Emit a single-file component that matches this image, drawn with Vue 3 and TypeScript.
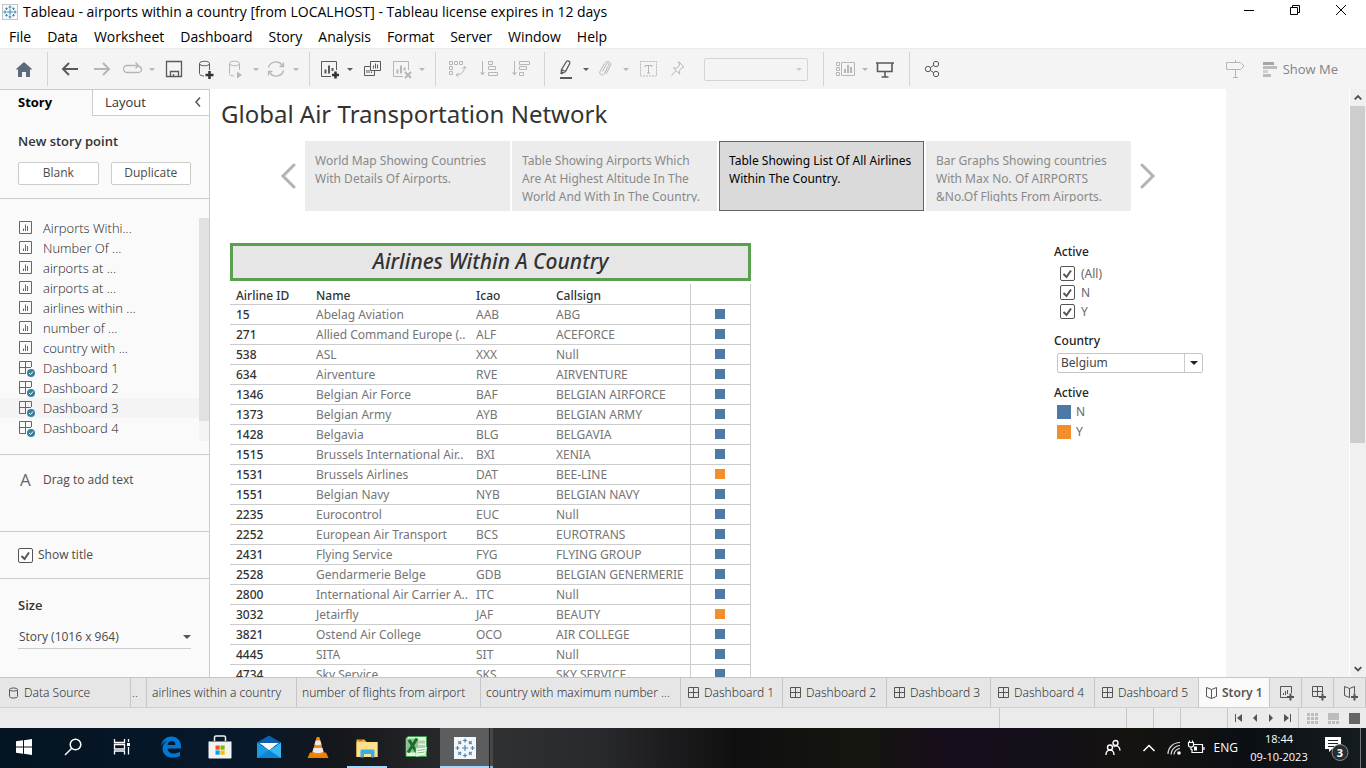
<script setup lang="ts">
import { ref } from 'vue'

interface Tool { icon: string; label: string; caret?: boolean; off?: boolean; gap: string }
interface Airline { id: string; name: string; icao: string; call: string; active?: boolean }
interface Sheet { label: string; kind: 'sheet' | 'dash'; hover?: boolean }
interface Tab { label: string; kind: 'sheet' | 'dash' | 'story'; size: string }

const menus = ['File', 'Data', 'Worksheet', 'Dashboard', 'Story', 'Analysis', 'Format', 'Server', 'Window', 'Help']

const icons: Record<string, string> = {
  home: '<path d="M12 5 20.5 12.5H18V20H14V15H10V20H6V12.5H3.5Z" fill="#5f6b7a" stroke="none"/>',
  back: '<path d="M20 12H5M11 6 5 12l6 6" stroke-width="2"/>',
  forward: '<path d="M4 12h15M13 6l6 6-6 6" stroke-width="2"/>',
  redo: '<path d="M9 15.500H7a3.500 3.500 0 0 1 0-7h11M15.500 5.500l3 3-3 3M18.500 9.500a3 3 0 0 1 0 6H9" stroke-width="1.300"/>',
  save: '<path d="M4.500 4.500h15v15h-15z" stroke-width="1.300"/><path d="M8.500 19.500v-5h8v5M11.500 19.500v-2.500" stroke-width="1.300"/>',
  dbAdd: '<path d="M15.500 13V6.500M5.500 6.500v10c0 1.500 2 2.500 4.500 2.500M5.500 6.500c0-3 10-3 10 0s-10 3-10 0z"/><path d="M15.500 14v8M11.500 18h8" stroke="#333" stroke-width="2.500"/>',
  dbRun: '<path d="M15.500 13V6.500M5.500 6.500v10c0 1.500 2 2.500 4.500 2.500M5.500 6.500c0-3 10-3 10 0s-10 3-10 0z"/><path d="M13 14.500v7l5-3.500z" fill="currentColor" stroke="none"/>',
  refresh: '<path d="M4.500 10.500a7.500 7 0 0 1 13.500-2.500l1 1.500M19.500 13.500A7.500 7 0 0 1 6 16l-1-1.500M19.500 5.500v4h-4M4.500 18.500v-4h4" stroke-width="1.300"/>',
  newSheet: '<path d="M13 19.500H3.500v-15h15V13"/><path d="M7.500 16.500v-4M11 16.500V8.500M14.500 14v-3" stroke-width="2"/><path d="M17.500 14.500v7M14 18h7" stroke="#333" stroke-width="2.500"/>',
  duplicate: '<path d="M10.500 4.500h10v9h-10zM10 9.500H4.500v9h10V14M13.500 11.500v-3M15.500 11.500v-5M17.500 11.500v-4M7 16v-3M9 16v-3M11.500 16v-1.500"/>',
  clear: '<path d="M13 19.500H3.500v-15h15V13"/><path d="M7.500 16.500v-4M11 16.500V8.500M14.500 13.500v-3" stroke-width="2"/><path d="M15 15l6 6M21 15l-6 6" stroke-width="2"/>',
  swap: '<path d="M4.500 4.500h3v3h-3zM9.500 4.500h3v3h-3zM14.500 4.500h3v3h-3zM4.500 9.500h3v3h-3zM4.500 14.500h3v3h-3zM19.500 9.500c0 5-3 8-8 8.500M17.500 11.500l2-2 2 2M13.500 16l-2.500 2 2.500 2"/>',
  asc: '<path d="M5.500 4v13M3.500 15l2 3 2-3M11.500 4.500h4v3h-4zM11.500 9.500h7v3h-7zM11.500 15.500h9v3h-9z"/>',
  desc: '<path d="M5.500 4v13M3.500 15l2 3 2-3M10.500 4.500h10v3h-10zM10.500 9.500h7v3h-7zM10.500 15.500h4v3h-4z"/>',
  pen: '<path d="M7.500 12.500 12.500 4.500c1-1.500 4 0 3.200 2L11.500 14.500l-3.500 2zM7.500 12.500l4 2M7.500 12.500 7 17" stroke-width="1.300"/><path d="M6 21h12" stroke-width="2"/>',
  clip: '<path d="M8.500 14.500l4-7.500c1-1.500 3-.5 2.300 1.200l-4.500 8.500c-1.500 2.500-5.500.8-4.300-2.200l4.500-8c2-3.500 7.500-1.500 6 2l-4.500 8.500"/>',
  text: '<path d="M4.500 4.500h16v14.500h-16z" stroke-dasharray="2 1"/><path d="M9 10V8.500h7V10M12.500 8.500V16M11 16h3"/>',
  pin: '<path d="M12.500 4.500l5.500 5.500-2 .5-2.500 3 .2 3.500-6.200-6 3.500.200 2.500-3zM9.500 14l-4 4.500"/>',
  cards: '<path d="M3.500 5.500h3v3h-3zM3.500 10.500h3v3h-3zM3.500 15.500h3v3h-3zM8.500 5.500h13v13h-13z"/><path d="M12 16v-4M15 16V8M18 16v-6" stroke-width="2"/>',
  present: '<path d="M3 6h18M4.500 6v8.500h14.500V6M12 14.500V20M8.500 20h7" stroke-width="1.600"/>',
  share: '<circle cx="7" cy="12" r="2.700"/><circle cx="15" cy="7" r="2.700"/><circle cx="15" cy="17" r="2.700"/><path d="M9.300 10.500l3.400-2.100M9.300 13.500l3.400 2.100"/>',
  sign: '<path d="M3.500 5.500h14l3.500 3.500-3.500 3.500h-14zM12.500 3v2.500M12.500 12.500v8M10 20.500h5"/>',
}

const groups: Tool[][] = [
  [{ icon: 'home', label: 'Start page', gap: 'g0' }],
  [
    { icon: 'back', label: 'Undo', gap: 'g0' },
    { icon: 'forward', label: 'Redo', off: true, gap: 'g8' },
    { icon: 'redo', label: 'Replay', off: true, caret: true, gap: 'g6' },
    { icon: 'save', label: 'Save', gap: 'g2' },
    { icon: 'dbAdd', label: 'New data source', gap: 'g8' },
    { icon: 'dbRun', label: 'Pause auto updates', off: true, caret: true, gap: 'g6' },
    { icon: 'refresh', label: 'Run update', off: true, caret: true, gap: 'g0' },
  ],
  [
    { icon: 'newSheet', label: 'New worksheet', caret: true, gap: 'g0' },
    { icon: 'duplicate', label: 'Duplicate', gap: 'g2' },
    { icon: 'clear', label: 'Clear sheet', off: true, caret: true, gap: 'g6' },
  ],
  [
    { icon: 'swap', label: 'Swap rows and columns', off: true, gap: 'g0' },
    { icon: 'asc', label: 'Sort ascending', off: true, gap: 'g8' },
    { icon: 'desc', label: 'Sort descending', off: true, gap: 'g8' },
  ],
  [
    { icon: 'pen', label: 'Highlight', caret: true, gap: 'g0' },
    { icon: 'clip', label: 'Group members', off: true, caret: true, gap: 'g0' },
    { icon: 'text', label: 'Show mark labels', off: true, gap: 'g2' },
    { icon: 'pin', label: 'Fix axes', off: true, gap: 'g6' },
  ],
  [
    { icon: 'cards', label: 'Show or hide cards', off: true, caret: true, gap: 'g0' },
    { icon: 'present', label: 'Presentation mode', gap: 'g0' },
  ],
  [{ icon: 'share', label: 'Share', gap: 'g0' }],
]

const sheets: Sheet[] = [
  { label: 'Airports Withi...', kind: 'sheet' },
  { label: 'Number Of ...', kind: 'sheet' },
  { label: 'airports at ...', kind: 'sheet' },
  { label: 'airports at ...', kind: 'sheet' },
  { label: 'airlines within ...', kind: 'sheet' },
  { label: 'number of ...', kind: 'sheet' },
  { label: 'country with ...', kind: 'sheet' },
  { label: 'Dashboard 1', kind: 'dash' },
  { label: 'Dashboard 2', kind: 'dash' },
  { label: 'Dashboard 3', kind: 'dash', hover: true },
  { label: 'Dashboard 4', kind: 'dash' },
]

const points = [
  ['World Map Showing Countries', 'With Details Of Airports.'],
  ['Table Showing Airports Which', 'Are At Highest Altitude In The', 'World And With In The Country.'],
  ['Table Showing List Of All Airlines', 'Within The Country.'],
  ['Bar Graphs Showing countries', 'With Max No. Of AIRPORTS', '&No.Of Flights From Airports.'],
]
const current = ref(2)

const airlines: Airline[] = [
  { id: '15', name: 'Abelag Aviation', icao: 'AAB', call: 'ABG' },
  { id: '271', name: 'Allied Command Europe (..', icao: 'ALF', call: 'ACEFORCE' },
  { id: '538', name: 'ASL', icao: 'XXX', call: 'Null' },
  { id: '634', name: 'Airventure', icao: 'RVE', call: 'AIRVENTURE' },
  { id: '1346', name: 'Belgian Air Force', icao: 'BAF', call: 'BELGIAN AIRFORCE' },
  { id: '1373', name: 'Belgian Army', icao: 'AYB', call: 'BELGIAN ARMY' },
  { id: '1428', name: 'Belgavia', icao: 'BLG', call: 'BELGAVIA' },
  { id: '1515', name: 'Brussels International Air..', icao: 'BXI', call: 'XENIA' },
  { id: '1531', name: 'Brussels Airlines', icao: 'DAT', call: 'BEE-LINE', active: true },
  { id: '1551', name: 'Belgian Navy', icao: 'NYB', call: 'BELGIAN NAVY' },
  { id: '2235', name: 'Eurocontrol', icao: 'EUC', call: 'Null' },
  { id: '2252', name: 'European Air Transport', icao: 'BCS', call: 'EUROTRANS' },
  { id: '2431', name: 'Flying Service', icao: 'FYG', call: 'FLYING GROUP' },
  { id: '2528', name: 'Gendarmerie Belge', icao: 'GDB', call: 'BELGIAN GENERMERIE' },
  { id: '2800', name: 'International Air Carrier A..', icao: 'ITC', call: 'Null' },
  { id: '3032', name: 'Jetairfly', icao: 'JAF', call: 'BEAUTY', active: true },
  { id: '3821', name: 'Ostend Air College', icao: 'OCO', call: 'AIR COLLEGE' },
  { id: '4445', name: 'SITA', icao: 'SIT', call: 'Null' },
  { id: '4734', name: 'Sky Service', icao: 'SKS', call: 'SKY SERVICE' },
]

const filters = ref([
  { label: '(All)', on: true },
  { label: 'N', on: true },
  { label: 'Y', on: true },
])
const showTitle = ref(true)
const country = ref('Belgium')
const storySize = ref('Story (1016 x 964)')

const tabs: Tab[] = [
  { label: '..', kind: 'sheet', size: 'cut' },
  { label: 'airlines within a country', kind: 'sheet', size: 'w150' },
  { label: 'number of flights from airport', kind: 'sheet', size: 'w184' },
  { label: 'country with maximum number ...', kind: 'sheet', size: 'w200' },
  { label: 'Dashboard 1', kind: 'dash', size: 'w102' },
  { label: 'Dashboard 2', kind: 'dash', size: 'w104' },
  { label: 'Dashboard 3', kind: 'dash', size: 'w104' },
  { label: 'Dashboard 4', kind: 'dash', size: 'w104' },
  { label: 'Dashboard 5', kind: 'dash', size: 'w104' },
  { label: 'Story 1', kind: 'story', size: 'w71' },
]
const rays = [0, 45, 90, 135, 180, 225, 270, 315]
</script>

<template>
  <div class="app">
    <header class="titlebar">
      <svg class="logo" viewBox="0 0 16 16" aria-hidden="true">
        <rect x="0.500" y="0.500" width="15" height="15" fill="#f7f9fb" stroke="#c4c4c4" />
        <path d="M8 5v6M5 8h6M8 1.500v3M6.500 3h3M8 11.500v3M6.500 13h3M1.500 8h3M3 6.500v3M11.500 8h3M13 6.500v3M4.500 3.500v2.500M3.300 4.700h2.500M11.500 3.500v2.500M10.200 4.700h2.500M4.500 10v2.500M3.300 11.300h2.500M11.500 10v2.500M10.200 11.300h2.500" fill="none" stroke="#3b84b4" />
      </svg>
      <h1>Tableau - airports within a country [from LOCALHOST] - Tableau license expires in 12 days</h1>
      <div class="winbtns">
        <button type="button" aria-label="Minimize"><svg viewBox="0 0 12 12"><path d="M1 6.500h10" /></svg></button>
        <button type="button" aria-label="Restore"><svg viewBox="0 0 12 12"><path d="M1.500 3.500h7v7h-7zM3.500 3.500v-2h7v7h-2" /></svg></button>
        <button type="button" aria-label="Close"><svg viewBox="0 0 12 12"><path d="M1 1l10 10M11 1L1 11" /></svg></button>
      </div>
    </header>

    <nav class="menubar">
      <button v-for="m in menus" :key="m" type="button">{{ m }}</button>
    </nav>

    <div class="toolbar">
      <template v-for="(g, gi) in groups" :key="gi">
        <div class="group">
          <div v-for="t in g" :key="t.icon" class="tool" :class="[t.gap, { off: t.off }]">
            <button type="button" :aria-label="t.label"><svg viewBox="0 0 24 24" v-html="icons[t.icon]"></svg></button>
            <button v-if="t.caret" type="button" class="caret" :aria-label="t.label + ' options'"><i></i></button>
          </div>
          <label v-if="gi === 4" class="fit">
            <select aria-label="Fit" disabled><option></option></select><i></i>
          </label>
        </div>
      </template>
      <div class="right">
        <button type="button" class="off" aria-label="Data guide"><svg viewBox="0 0 24 24" v-html="icons.sign"></svg></button>
        <button type="button" class="showme">
          <svg viewBox="0 0 14 15"><path d="M0 0h11v3H0z" fill="#a6a6a6" /><path d="M0 4h14v3H0z" fill="#bcbcbc" /><path d="M0 8h5v3H0z" fill="#d0d0d0" /><path d="M0 12h8v3H0z" fill="#bcbcbc" /></svg>
          Show Me
        </button>
      </div>
    </div>

    <div class="body">
      <aside class="side">
        <div class="sidetabs">
          <button type="button" class="on">Story</button>
          <button type="button" class="layout">Layout
            <svg viewBox="0 0 8 10" aria-hidden="true"><path d="M6 0.500L2 5l4 4.500" /></svg>
          </button>
        </div>
        <section class="newpoint">
          <h2>New story point</h2>
          <div><button type="button">Blank</button><button type="button">Duplicate</button></div>
        </section>
        <section class="sheets">
          <ul>
            <li v-for="(s, i) in sheets" :key="i" :class="{ hover: s.hover }">
              <svg v-if="s.kind === 'sheet'" viewBox="0 0 18 18"><path d="M1.500 2.500h12v12h-12zM5.500 12V9.500M7.500 12V5.500M9.500 12V7" /></svg>
              <svg v-else viewBox="0 0 18 18"><path d="M8 14.500H1.500v-12h12V8M7.500 2.500v12M1.500 8.500H13" /><circle cx="13" cy="14" r="4" fill="#34809f" stroke="none" /><path d="M11 14l1.500 1.500L15 12.500" stroke="#fff" /></svg>
              <span>{{ s.label }}</span>
            </li>
          </ul>
          <div class="minibar"><i></i></div>
        </section>
        <section class="drag"><span class="bigA">A</span>Drag to add text</section>
        <section class="show">
          <label class="check"><input v-model="showTitle" type="checkbox" /><svg viewBox="0 0 15 15"><path d="M3.500 8l3 3L11 4.500" /></svg>Show title</label>
        </section>
        <section class="size">
          <h2>Size</h2>
          <label><select v-model="storySize" aria-label="Size"><option>Story (1016 x 964)</option></select><i></i></label>
        </section>
      </aside>

      <main class="canvas">
        <div class="story">
          <h2 class="storytitle">Global Air Transportation Network</h2>
          <div class="navigator">
            <button type="button" class="arrow" aria-label="Previous"><svg viewBox="0 0 16 26"><path d="M14 2L3 13l11 11" /></svg></button>
            <div class="points">
              <button v-for="(p, i) in points" :key="i" type="button" class="point" :class="{ sel: i === current }" @click="current = i">
                <span><template v-for="(l, j) in p" :key="j">{{ l }}<br /></template></span>
              </button>
            </div>
            <button type="button" class="arrow" aria-label="Next"><svg viewBox="0 0 16 26"><path d="M2 2l11 11L2 24" /></svg></button>
          </div>
          <div class="dash">
            <div class="view">
              <h3>Airlines Within A Country</h3>
              <table>
                <colgroup><col class="c80" /><col class="c160" /><col class="c80" /><col class="c140" /><col /></colgroup>
                <thead>
                  <tr><th>Airline ID</th><th>Name</th><th>Icao</th><th>Callsign</th><th></th></tr>
                </thead>
                <tbody>
                  <tr v-for="a in airlines" :key="a.id">
                    <th scope="row">{{ a.id }}</th><td>{{ a.name }}</td><td>{{ a.icao }}</td><td>{{ a.call }}</td>
                    <td><i class="mark" :class="{ y: a.active }"></i></td>
                  </tr>
                </tbody>
              </table>
            </div>
            <div class="legend">
              <h4>Active</h4>
              <div class="filters">
                <label v-for="f in filters" :key="f.label" class="check"><input v-model="f.on" type="checkbox" /><svg viewBox="0 0 15 15"><path d="M3.500 8l3 3L11 4.500" /></svg>{{ f.label }}</label>
              </div>
              <h4>Country</h4>
              <label class="country"><select v-model="country" aria-label="Country"><option>Belgium</option></select><span><i></i></span></label>
              <h4>Active</h4>
              <ul><li><i></i>N</li><li><i class="y"></i>Y</li></ul>
            </div>
          </div>
        </div>
        <div class="scroll">
          <svg viewBox="0 0 17 17"><path d="M5 10.500L8.500 7l3.500 3.500" /></svg>
          <div class="thumb"></div>
          <svg viewBox="0 0 17 17"><path d="M5 7l3.500 3.500L12 7" /></svg>
        </div>
      </main>
    </div>

    <nav class="tabs">
      <button type="button" class="source"><svg viewBox="0 0 14 14"><path d="M2.500 3.500v7c0 2 8 2 8 0v-7c0-2-8-2-8 0c0 2 8 2 8 0" /></svg>Data Source</button>
      <button v-for="t in tabs" :key="t.label" type="button" :class="[t.size, { cur: t.kind === 'story' }]">
        <svg v-if="t.kind === 'dash'" viewBox="0 0 14 14"><path d="M1.500 1.500h10v10h-10zM6.500 1.500v10M1.500 6.500h10" /></svg>
        <svg v-if="t.kind === 'story'" viewBox="0 0 14 14"><path d="M6.500 3.500L1.500 1.500v9l5 2 5-2v-9zV12" /></svg>
        {{ t.label }}
      </button>
      <button type="button" class="add" aria-label="New worksheet"><svg viewBox="0 0 16 16"><path d="M8 12.500H1.500v-11h11V8M4.500 10V8M6.500 10V6M8.500 9V5" /><path d="M11.500 8.500v7M8 12h7" stroke-width="2" /></svg></button>
      <button type="button" class="add" aria-label="New dashboard"><svg viewBox="0 0 16 16"><path d="M8 11.500H1.500v-10h10V8M6.500 1.500v10M1.500 6.500h10" /><path d="M11.500 8.500v7M8 12h7" stroke-width="2" /></svg></button>
      <button type="button" class="add" aria-label="New story"><svg viewBox="0 0 16 16"><path d="M6.500 3.500L1.500 1.500v9l5 2M6.500 3.500l5-2V8M6.500 3.500v9" /><path d="M11.500 8.500v7M8 12h7" stroke-width="2" /></svg></button>
    </nav>

    <div class="status">
      <span class="s127"></span><span class="s27"></span><span class="s27"></span><span class="s47"></span>
      <div class="pager">
        <button type="button" aria-label="First"><svg viewBox="0 0 8 8"><path d="M1 0v8H0V0zM7 0v8L2 4z" /></svg></button>
        <button type="button" aria-label="Previous sheet"><svg viewBox="0 0 8 8"><path d="M6 0v8L2 4z" /></svg></button>
        <button type="button" aria-label="Next sheet"><svg viewBox="0 0 8 8"><path d="M2 0v8l4-4z" /></svg></button>
        <button type="button" aria-label="Last"><svg viewBox="0 0 8 8"><path d="M7 0v8h1V0zM1 0v8l5-4z" /></svg></button>
      </div>
      <div class="views">
        <button type="button" aria-label="Sheet sorter"><svg viewBox="0 0 11 11"><path d="M0 0h3v3H0zM4 0h3v3H4zM8 0h3v3H8zM0 4h3v3H0zM4 4h3v3H4zM8 4h3v3H8zM0 8h3v3H0zM4 8h3v3H4zM8 8h3v3H8z" fill="#bdbdbd" /></svg></button>
        <button type="button" aria-label="Filmstrip"><svg viewBox="0 0 11 11"><path d="M0 0h11v7H0zM0 8h3v3H0zM4 8h3v3H4zM8 8h3v3H8z" fill="#bdbdbd" /></svg></button>
        <button type="button" aria-label="Tabs"><svg viewBox="0 0 11 11"><path d="M0 0h11v11H0z" fill="#666" /></svg></button>
      </div>
    </div>

    <footer class="taskbar">
      <button type="button" aria-label="Start"><svg viewBox="0 0 24 24"><path d="M4 6.300l7-1v6.200H4zM12 5.200l8-1.200v7.500h-8zM4 12.500h7v6.200l-7-1zM12 12.500h8V20l-8-1.200z" fill="#fff" /></svg></button>
      <button type="button" aria-label="Search"><svg viewBox="0 0 24 24"><g fill="none" stroke="#fff" stroke-width="1.500"><circle cx="14.500" cy="9.500" r="5.300" /><path d="M10.500 13.500L4 20" /></g></svg></button>
      <button type="button" aria-label="Task view"><svg viewBox="0 0 24 24"><path d="M4.500 4v3.500h10V4M4.500 19.500V16h10v3.500M4.500 9.500h10v4.500h-10zM18.500 4v3M18.500 12v7.500" fill="none" stroke="#fff" stroke-width="1.300" /><path d="M17 8h3v3h-3z" fill="#fff" /></svg></button>
      <button type="button" aria-label="Edge"><svg viewBox="0 0 24 24"><path d="M2 11.500C3 4.500 7.500 1.500 12.300 1.500c6 0 9.700 4.500 9.700 9.500v2.500H8.500c.3 3.500 3 5 6 5 2.500 0 4.500-.7 6.500-1.800v4.300c-2 1-4.500 1.600-7.500 1.600-6 0-10-3.600-10-8.800 0-3.500 2-6.500 5-8-3 .6-5 2.600-6.500 5.700zM8.600 10h7.800c0-2.700-1.400-4-3.700-4S9 7.400 8.600 10z" fill="#0078d7" /></svg></button>
      <button type="button" aria-label="Store"><svg viewBox="0 0 24 24"><path d="M6.500 6V2.500c0-1 .5-1.500 1.500-1.500h8c1 0 1.500.5 1.500 1.500V6" fill="none" stroke="#f2f2f2" stroke-width="1.500" /><path d="M0.500 6.500h23V22.500c0 .6-.4 1-1 1h-21c-.6 0-1-.4-1-1z" fill="#f3f3f3" /><path d="M7.500 10.500h4.200v4.200H7.500z" fill="#f25022" /><path d="M12.500 10.500h4.200v4.200h-4.200z" fill="#7fba00" /><path d="M7.500 15.500h4.200v4.200H7.500z" fill="#00a4ef" /><path d="M12.500 15.500h4.200v4.200h-4.200z" fill="#ffb900" /></svg></button>
      <button type="button" aria-label="Mail"><svg viewBox="0 0 24 24"><path d="M0 7.500L12 0.500l12 7V10H0z" fill="#0f5fb0" /><path d="M2.500 8h19L12 15.500z" fill="#fafafa" /><path d="M0 7.500L12 15l-3 8H0z" fill="#1a9be6" /><path d="M24 7.500L0.500 23H24z" fill="#35b9f5" /><path d="M0 23l12-8 12 8z" fill="#1184d4" /></svg></button>
      <button type="button" aria-label="VLC"><svg viewBox="0 0 24 24"><path d="M4 17.500h16l2.500 5.500h-21z" fill="#f07c00" /><path d="M10.700 2h2.600L18 18.500c-2 2.300-10 2.300-12 0z" fill="#f58a10" /><path d="M9.700 5.500h4.600l1.200 4c-2 1-5 1-7 0zM7.600 13h8.800l1.100 3.800c-3 1.700-8 1.700-11 0z" fill="#e9ebee" /></svg></button>
      <button type="button" class="open" aria-label="File Explorer"><svg viewBox="0 0 24 24"><path d="M1.500 3.500h8l2 2.500h11v15h-21z" fill="#e8b23a" /><path d="M1.500 6h21V21h-21z" fill="#ffe08a" /><path d="M5.500 21.500v-6.500c0-1 .5-1.500 1.500-1.500h11c1 0 1.500.5 1.500 1.500v6.500H16V18H9v3.500z" fill="#37aee8" /><path d="M4 4.500h3" stroke="#e05a3a" /></svg></button>
      <button type="button" aria-label="Excel"><svg viewBox="0 0 24 24"><path d="M4 1.500h18.500v20H2V3.500z" fill="#e6f1e3" stroke="#3a9a47" /><path d="M14 5.500h7v3h-7zM14 10h7v3h-7z" fill="#a9d3a2" /><path d="M3 3.500h11v14H3z" fill="#8cc487" /><path d="M5 5l7.500 12M13 3.500L4 17.500" stroke="#1d6b30" stroke-width="3" /><path d="M12 13l11-1-2 8-9 1.500z" fill="#f6faf5" stroke="#9bc79b" stroke-width="0.700" /><path d="M13.500 15.500l7.500-1M13.500 18l7-1" stroke="#7dbb7d" /></svg></button>
      <button type="button" class="open active" aria-label="Tableau"><svg viewBox="0 0 24 24"><rect x="1" y="1" width="22" height="22" fill="#f4f6f8" /><path d="M12 9v6M9 12h6" stroke="#4a86b4" stroke-width="1.200" /><path v-for="r in rays" :key="r" :transform="`rotate(${r} 12 12)`" d="M12 2.500v4M10 4.500h4" stroke="#4a86b4" stroke-width="1.200" /></svg></button>
      <span class="edge"></span>
      <div class="tray">
        <button type="button" aria-label="People"><svg viewBox="0 0 18 18"><g fill="none" stroke="#fff" stroke-width="1.400"><circle cx="6" cy="8.500" r="2.500" /><path d="M2 16c0-6.500 8-6.500 8 0" /><circle cx="11.500" cy="4" r="2.500" /><path d="M9.500 7.500c3-2 6.500 0 6.500 4" /></g></svg></button>
        <button type="button" class="up" aria-label="Hidden icons"><svg viewBox="0 0 18 18"><path d="M3.500 12L9 6.500l5.500 5.500" fill="none" stroke="#fff" stroke-width="1.500" /></svg></button>
        <button type="button" class="wifi" aria-label="Network"><svg viewBox="0 0 18 18"><g fill="none" stroke="#ddd" stroke-width="1.200"><path d="M3 15C3 9 8 3.500 15 3.500M6 15.500C6 11 10 6.500 15 6.500M9 15.500c0-3 3-6 6-6" /></g><circle cx="14" cy="14" r="1.800" fill="#fff" /></svg></button>
        <button type="button" class="batt" aria-label="Battery"><svg viewBox="0 0 18 18"><path d="M7 5.500H15.500v8H5V10M17 8v3M1.500 3.500h5v3c0 2-5 2-5 0zM2.500 3.500V1.500M5.500 3.500V1.500M4 8v3" fill="none" stroke="#fff" stroke-width="1.200" /><path d="M7 7.500H10v4H7z" fill="#fff" /></svg></button>
        <span class="lang">ENG</span>
        <time><span>18:44</span><span>09-10-2023</span></time>
        <button type="button" class="notes" aria-label="3 notifications"><svg viewBox="0 0 26 26"><path d="M1 2h16v12H8l-3 3v-3H1z" fill="#fff" /><path d="M4 5.500h10M4 8.500h10M4 11.500h6" stroke="#222" /><circle cx="16" cy="17.500" r="8" fill="#2a2d30" stroke="#8a8a8a" /></svg><b>3</b></button>
        <i class="peek"></i>
      </div>
    </footer>
  </div>
</template>

<style>
html, body { margin: 0; height: 100%; }
</style>

<style scoped>
* { box-sizing: border-box; }
button, select { font: inherit; color: inherit; background: none; border: 0; padding: 0; margin: 0; }
button { cursor: default; }
h1, h2, h3, h4, ul { margin: 0; padding: 0; font-weight: inherit; list-style: none; }
i { display: block; }
svg { display: block; }

.app {
  display: flex; flex-direction: column; height: 100vh; overflow: hidden; background: #fff; color: #333;
  font: 12px/16px "Open Sans", "Noto Sans", sans-serif;
}

.titlebar { flex: none; display: flex; align-items: center; height: 24px; padding: 0 2px; color: #000; }
.logo { width: 16px; height: 16px; margin-right: 5px; }
h1 { flex: 1; font-size: 14px; line-height: 20px; white-space: nowrap; }
.winbtns { display: flex; align-self: flex-start; }
.winbtns button { display: grid; place-items: center; width: 46px; height: 20px; }
.winbtns svg { width: 12px; height: 12px; fill: none; stroke: #000; }

.menubar { flex: none; display: flex; gap: 16px; height: 24px; padding-left: 9px; color: #000; font-size: 14px; line-height: 26px; }
.menubar button { line-height: 26px; }

.toolbar { flex: none; display: flex; align-items: center; height: 41px; background: #f4f4f4; border-top: 1px solid #ececec; color: #5a5a5a; }
.group { display: flex; align-items: center; height: 34px; border-right: 1px solid #d4d4d4; }
.group:nth-child(1) { padding: 0 11px 0 12px; }
.group:nth-child(2) { padding: 0 5px 0 10px; }
.group:nth-child(3) { padding: 0 5px 0 8px; }
.group:nth-child(4) { padding: 0 11px 0 9px; }
.group:nth-child(5) { padding: 0 15px 0 9px; }
.group:nth-child(6) { padding: 0 12px 0 9px; }
.group:nth-child(7) { padding-left: 11px; border: 0; }
.tool { display: flex; align-items: center; }
.tool svg { width: 24px; height: 24px; }
.toolbar svg { fill: none; stroke: currentColor; }
.off { color: #b6b6b6; }
.g2 { margin-left: 2px; }
.g6 { margin-left: 6px; }
.g8 { margin-left: 8px; }
.caret { display: grid; place-items: center; width: 16px; height: 24px; }
.caret i, .fit i { border: 3px solid transparent; border-top: 3px solid currentColor; border-bottom: 0; }
.fit { display: grid; align-items: center; width: 104px; height: 23px; margin-left: 14px; border: 1px solid #d4d4d4; border-radius: 2px; color: #ccc; }
.fit select { grid-area: 1 / 1; width: 100%; height: 100%; appearance: none; }
.fit i { grid-area: 1 / 1; justify-self: end; margin-right: 5px; }
.right { display: flex; align-items: center; gap: 16px; margin-left: auto; padding-right: 28px; }
.right button svg { width: 24px; height: 24px; }
.right .showme { display: flex; align-items: center; gap: 6px; color: #828282; font-size: 13px; }
.right .showme svg { width: 14px; height: 15px; stroke: none; }

.body { flex: 1; display: flex; min-height: 0; }
.side { flex: none; display: flex; flex-direction: column; width: 210px; background: #fafafa; border-right: 1px solid #ccc; color: #4b4b4b; }
.sidetabs { display: flex; height: 27px; font-size: 13px; line-height: 24px; color: #333; }
.sidetabs button { border-top: 1px solid #ccc; padding-bottom: 2px; }
.sidetabs .on { width: 92px; padding-left: 18px; text-align: left; font-weight: 700; color: #000; }
.sidetabs .layout { flex: 1; display: flex; justify-content: space-between; align-items: center; padding: 0 7px 1px 12px; border: 1px solid #ccc; border-right: 0; background: #fff; }
.layout svg { width: 8px; height: 10px; fill: none; stroke: #555; stroke-width: 1.500; }
.side section { flex: none; border-bottom: 1px solid #ccc; }
.side h2 { font-size: 13px; line-height: 18px; font-weight: 600; color: #333; }
.newpoint { height: 83px; padding: 16px 18px 0; }
.newpoint div { display: flex; gap: 12px; padding-top: 12px; }
.newpoint button { width: 81px; height: 23px; padding-bottom: 2px; border: 1px solid #ccc; border-radius: 2px; background: #fff; line-height: 19px; }
.side .sheets { display: flex; height: 256px; padding: 19px 0 13px; }
.sheets ul { flex: 1; font-size: 13px; color: #444; }
.sheets li { display: flex; align-items: center; height: 20px; padding-left: 18px; }
.sheets li span { font-weight: 300; color: #222; }
.sheets li.hover { background: #f4f4f4; }
.sheets svg { width: 18px; height: 18px; margin-right: 7px; fill: none; stroke: #666; }
.minibar { width: 10px; background: #f4f4f4; }
.minibar i { height: 203px; background: #e1e1e1; }
.side .drag { display: flex; align-items: flex-start; height: 77px; padding: 16px 0 0 20px; line-height: 18px; }
.bigA { width: 23px; font-size: 17px; color: #666; }
.side .show { height: 47px; padding-top: 15px; padding-left: 18px; }
.check { display: flex; align-items: center; position: relative; }
.check input { appearance: none; width: 15px; height: 15px; margin: 0; border: 1px solid #555; border-radius: 2px; background: #fff; }
.check svg { width: 15px; height: 15px; margin: 0 6px 0 -15px; visibility: hidden; fill: none; stroke: #555; stroke-width: 2; pointer-events: none; }
.check input:checked + svg { visibility: visible; }
.side .show svg { margin-right: 5px; }
.side .size { flex: 1; padding: 17px 18px 0; border: 0; }
.size label { display: grid; align-items: center; height: 24px; margin-top: 11px; border-bottom: 1px solid #ccc; }
.size select { grid-area: 1 / 1; width: 100%; padding-left: 1px; appearance: none; }
.size i { grid-area: 1 / 1; justify-self: end; border: 4px solid transparent; border-top-color: #555; border-bottom: 0; }

.canvas { flex: 1; display: flex; min-width: 0; background: #f4f4f4; font-family: "Noto Sans", "Open Sans", sans-serif; }
.story { width: 1016px; flex: 0 1 auto; padding: 0 11px; background: #fff; overflow: hidden; }
.storytitle { height: 52px; font-size: 24px; line-height: 50px; color: #333; }
.navigator { display: flex; justify-content: center; align-items: center; gap: 9px; }
.arrow svg { width: 16px; height: 26px; fill: none; stroke: #b3b3b3; stroke-width: 3; stroke-linecap: round; }
.points { display: flex; gap: 2px; }
.point { width: 205px; height: 70px; padding: 11px 10px 9px; overflow: hidden; background: #ececec; color: #898989; text-align: left; line-height: 18px; white-space: nowrap; }
.point span { display: block; height: 50px; overflow: hidden; }
.point.sel { padding: 10px 9px 8px; border: 1px solid #666; background: #dadada; color: #000; }
.dash { display: flex; justify-content: space-between; align-items: flex-start; padding: 32px 12px 0 9px; }
.view { width: 521px; }
h3 { height: 38px; border: 3px solid #59a14f; background: #e6e6e6; font-size: 21px; line-height: 30px; font-weight: 500; font-style: italic; text-align: center; color: #333; }
table { width: 100%; margin-top: 3px; border-collapse: separate; border-spacing: 0; table-layout: fixed; white-space: nowrap; }
.c80 { width: 80px; }
.c160 { width: 160px; }
.c140 { width: 141px; }
th, td { height: 20px; padding: 0 0 0 6px; border-bottom: 1px solid #ccc; text-align: left; line-height: 19px; }
thead th { height: 21px; padding-top: 3px; line-height: 17px; }
th { font-weight: 500; color: #333; }
td { color: #757575; }
th:nth-child(4), td:nth-child(4) { border-right: 1px solid #ccc; }
th:last-child, td:last-child { padding: 0; border-right: 1px solid #ccc; vertical-align: top; }
.mark { width: 10px; height: 10px; margin: 4px 0 0 24px; background: #4e79a7; }
.y, .mark.y { background: #f28e2b; }
.legend { width: 149px; color: #666; }
.legend h4 { line-height: 18px; font-weight: 500; color: #222; }
.filters { display: grid; padding: 3px 0 11px 6px; }
.filters label { height: 19px; }
.country { display: flex; width: 146px; height: 20px; margin: 3px 0 11px 3px; border: 1px solid #c4c4c4; border-radius: 2px; color: #444; }
.country select { flex: 1; padding-left: 3px; font-size: 12px; appearance: none; }
.country span { display: grid; place-items: center; width: 18px; border-left: 1px solid #ccc; }
.country i { border: 4px solid transparent; border-top-color: #222; border-bottom: 0; }
.legend ul { padding: 0 0 0 3px; }
.legend li { display: flex; align-items: center; gap: 5px; height: 20px; }
.legend li i { width: 14px; height: 14px; background: #4e79a7; }
.legend li i.y { background: #f28e2b; }
.scroll { display: flex; flex-direction: column; flex: none; width: 17px; margin-left: auto; border-left: 1px solid #fff; background: #f0f0f0; }
.scroll svg { width: 16px; height: 17px; fill: none; stroke: #505050; stroke-width: 2; }
.thumb { flex: 0 1 337px; width: 15px; background: #cdcdcd; }
.scroll svg:last-child { margin-top: auto; }

.tabs { flex: none; display: flex; height: 31px; background: #e6e6e6; border-top: 1px solid #c6c6c6; border-bottom: 1px solid #d0d0d0; color: #333; font-family: "Noto Sans", "Open Sans", sans-serif; font-weight: 300; line-height: 20px; white-space: nowrap; }
.tabs button { flex: none; display: flex; align-items: center; gap: 3px; padding-left: 5px; border-right: 1px solid #c6c6c6; overflow: hidden; }
.tabs svg { flex: none; width: 14px; height: 14px; fill: none; stroke: #555; }
.tabs .source { width: 131px; padding-left: 7px; }
.tabs .cut { width: 16px; padding-left: 1px; }
.w150 { width: 150px; }
.w184 { width: 184px; }
.w200 { width: 200px; }
.w102 { width: 102px; }
.w104 { width: 104px; }
.w71 { width: 71px; }
.tabs .w102, .tabs .w104 { padding-left: 6px; }
.tabs .cur { padding-left: 6px; background: #fafafa; font-weight: 600; color: #555; }
.tabs .add { width: 32px; padding-left: 9px; }
.tabs .add svg { width: 16px; height: 16px; }

.status { flex: none; display: flex; justify-content: flex-end; height: 20px; background: #ebebeb; }
.status > * { border-left: 1px solid #c6c6c6; }
.s127 { width: 127px; }
.s27 { width: 27px; }
.s47 { width: 47px; }
.pager { display: flex; align-items: center; gap: 8px; width: 71px; padding-left: 7px; }
.pager svg { width: 8px; height: 8px; fill: #555; }
.views { display: flex; align-items: center; gap: 10px; width: 68px; padding-left: 8px; }
.views svg { width: 11px; height: 11px; }

.taskbar { flex: none; display: flex; height: 40px; color: #fff; background: linear-gradient(90deg, #051422 0, #06182a 18%, #15171b 25%, #2f3133 36%, #28292c 44%, #100f10 54%, #15160f 63%, #170d1b 69%, #14101a 76%, #15130f 83%, #0b0f14 91%, #151c1f 100%); }
.taskbar > button { display: grid; place-items: center; width: 49px; height: 40px; border-bottom: 2px solid transparent; }
.taskbar > button:first-child { width: 48px; }
.taskbar > button svg { width: 24px; height: 24px; }
.taskbar > .open { background: linear-gradient(#a9d6fb, #a9d6fb) center bottom / 40px 2px no-repeat; border: 0; }
.taskbar > .active { background: linear-gradient(#a9d6fb, #a9d6fb) center bottom / 100% 2px no-repeat, #5c5d5e; }
.edge { width: 4px; border-left: 1px solid #222; background: linear-gradient(#484848 38px, #8db5d6 38px); }
.tray { display: flex; align-items: center; margin-left: auto; }
.tray > button svg { width: 18px; height: 18px; }
.up { margin-left: 18px; }
.wifi { margin-left: 7px; }
.batt { margin-left: 4px; }
.lang { margin-left: 9px; }
time { display: flex; flex-direction: column; width: 60px; margin-left: 11px; text-align: center; line-height: 18px; font-size: 11px; }
.notes { display: grid; margin-left: 15px; }
.tray > .notes svg { grid-area: 1 / 1; width: 26px; height: 26px; }
.notes b { grid-area: 1 / 1; align-self: end; justify-self: end; width: 20px; font-size: 11px; line-height: 17px; text-align: center; }
.peek { align-self: stretch; width: 6px; margin-left: 10px; border-left: 1px solid #777; }
</style>
